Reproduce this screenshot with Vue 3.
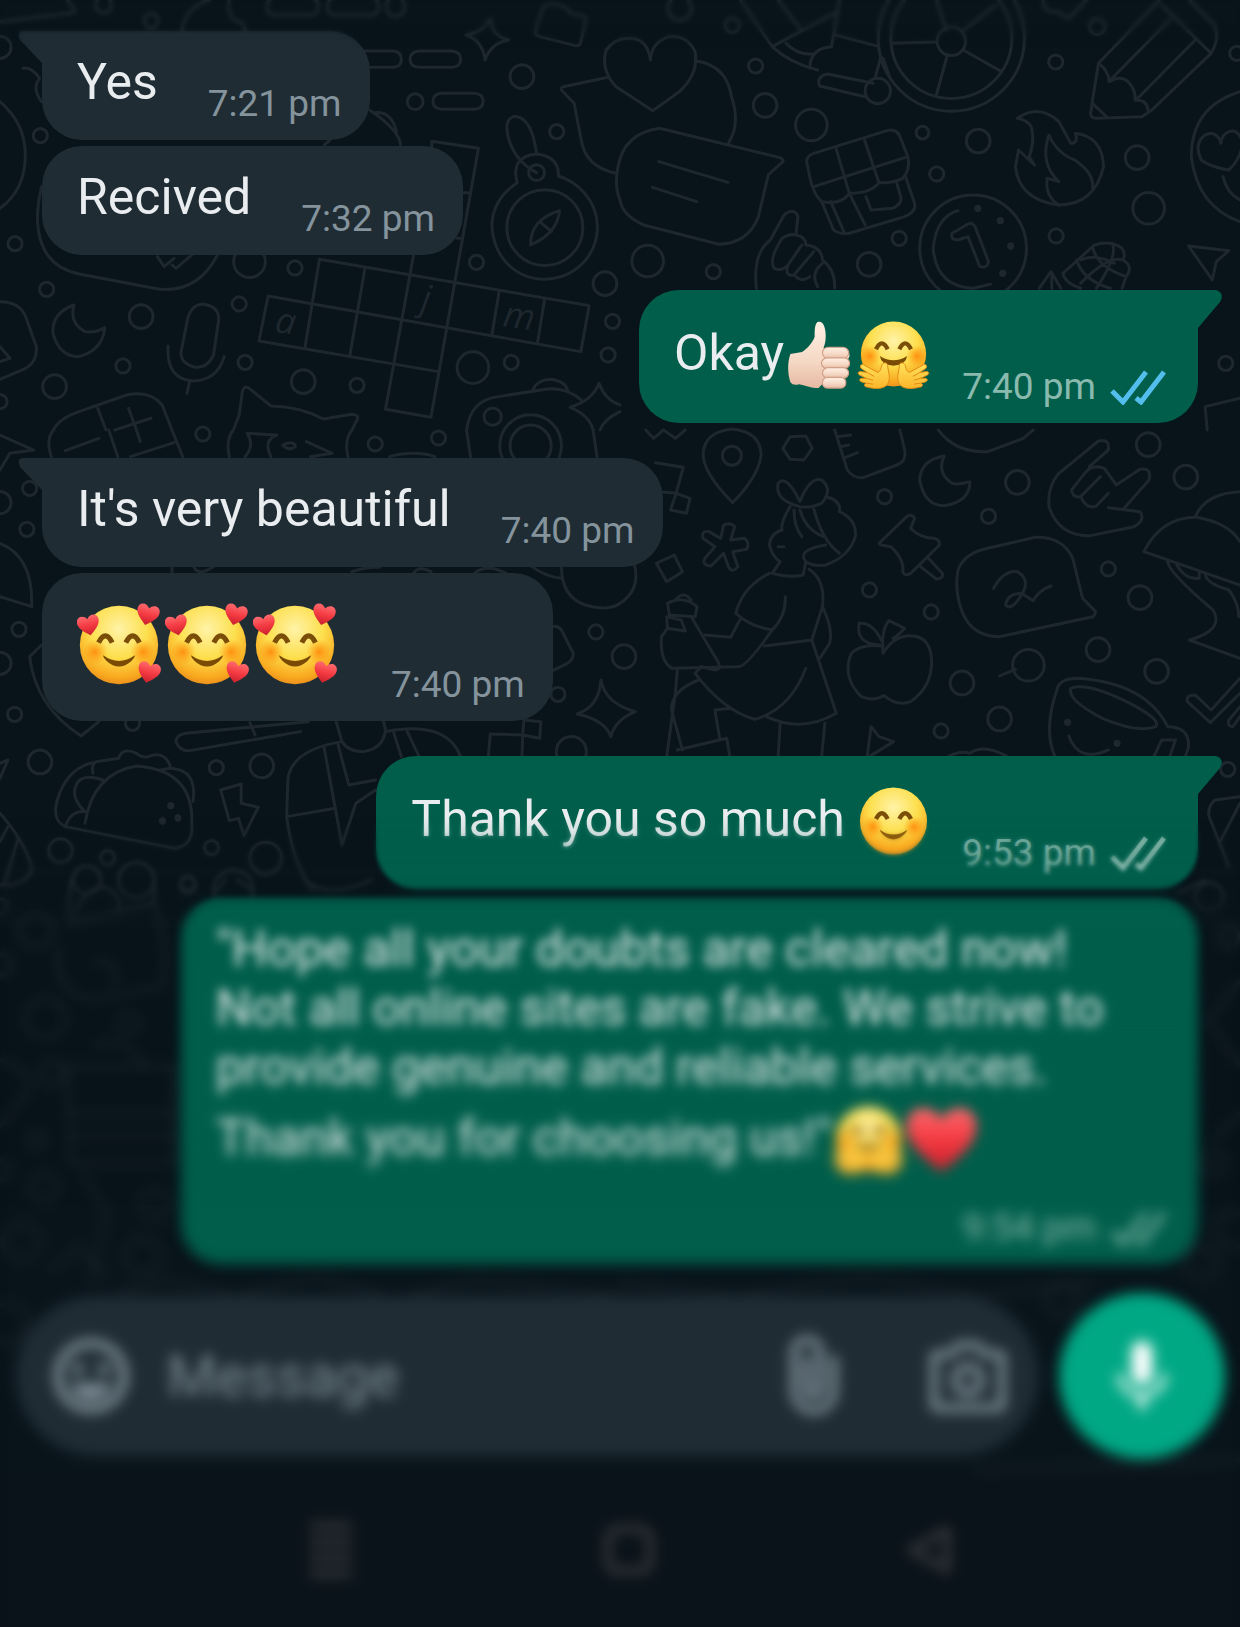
<template>
  <div class="chat">
    <!-- Shared emoji artwork -->
    <svg class="sprite" aria-hidden="true">
      <defs>
        <radialGradient id="skin" cx="0.5" cy="0.3" r="0.72">
          <stop offset="0" stop-color="#fff3a8" />
          <stop offset="0.5" stop-color="#fddf4e" />
          <stop offset="0.85" stop-color="#f9a91f" />
          <stop offset="1" stop-color="#e98c1b" />
        </radialGradient>
        <radialGradient id="blush">
          <stop offset="0" stop-color="#ff7a00" stop-opacity="0.75" />
          <stop offset="1" stop-color="#ff8a00" stop-opacity="0" />
        </radialGradient>
        <linearGradient id="palm" x1="0" y1="0" x2="0" y2="1">
          <stop offset="0" stop-color="#fff1e4" />
          <stop offset="0.6" stop-color="#f5d8c5" />
          <stop offset="1" stop-color="#e5b9a2" />
        </linearGradient>
        <linearGradient id="hand" x1="0" y1="0" x2="0" y2="1">
          <stop offset="0" stop-color="#ffe35c" />
          <stop offset="1" stop-color="#fbb52a" />
        </linearGradient>
        <linearGradient id="red" x1="0" y1="0" x2="0" y2="1">
          <stop offset="0" stop-color="#ff6b6e" />
          <stop offset="0.5" stop-color="#f43a42" />
          <stop offset="1" stop-color="#c9202c" />
        </linearGradient>
        <g id="heart">
          <path d="M12 22C6 17 1 13 1 7.500C1 1 9 0 12 5.500C15 0 23 1 23 7.500C23 13 18 17 12 22Z" fill="url(#red)" />
        </g>
        <g id="face">
          <circle cx="36" cy="36" r="34.500" fill="url(#skin)" />
          <circle cx="15" cy="42" r="11" fill="url(#blush)" />
          <circle cx="57" cy="42" r="11" fill="url(#blush)" />
          <g fill="none" stroke="#7a4d08" stroke-width="4.500">
            <path d="M18 34Q24 22 30 34" />
            <path d="M42 34Q48 22 54 34" />
          </g>
          <path d="M22 45Q36 55 50 45Q50 47 47 50Q36 60 25 50Q22 47 22 45Z" fill="#7a4b05" />
        </g>
        <symbol id="emoji-smile" viewBox="0 0 72 72">
          <use href="#face" />
        </symbol>
        <symbol id="emoji-hearts" viewBox="-1 -1 74 74">
          <use href="#face" />
          <use href="#heart" transform="translate(-1 8) rotate(-12 12 12) scale(0.88)" />
          <use href="#heart" transform="translate(50 -1) rotate(14 12 12) scale(0.9)" />
          <use href="#heart" transform="translate(51 50) rotate(14 12 12) scale(0.9)" />
        </symbol>
        <symbol id="emoji-hug" viewBox="0 0 72 72">
          <circle cx="36" cy="35" r="33.500" fill="url(#skin)" />
          <circle cx="12" cy="37" r="11" fill="url(#blush)" />
          <circle cx="60" cy="37" r="11" fill="url(#blush)" />
          <g fill="none" stroke="#7a4d08" stroke-width="4.500">
            <path d="M18 30Q24 18 30 30" />
            <path d="M42 30Q48 18 54 30" />
          </g>
          <path d="M22 37Q36 46 50 37Q49 46 36 47Q23 46 22 37Z" fill="#7a4b05" />
          <g id="open-hand" fill="url(#hand)" stroke="#e08a16" stroke-width="1">
            <path
              d="M27 44C22 45 25 51 20 54L5 46C2 45 1 48 3 50L9 54L2 53C-1 53 -1 56 2 57L8 60L3 60C0 61 1 63 4 64L8 65C5 66 6 69 9 69C16 71 28 72 31 64C33 57 30 52 30 46Q29 44 27 44Z"
            />
            <path d="M9 54L16 58M8 60L15 62M8 65L15 66" fill="none" />
          </g>
          <use href="#open-hand" transform="translate(72 0) scale(-1 1)" />
        </symbol>
        <symbol id="emoji-thumb" viewBox="0 0 72 72">
          <path
            d="M33 2C36 1 39 3 40 7C42 14 42 22 39 29L60 30C68 32 67 40 62 41L34 70C26 70 20 67 14 66Q8 68 5 64C2 54 2 44 5 35L17 33C22 30 29 22 30 17C30 11 30 4 33 2Z"
            fill="url(#palm)"
          />
          <g fill="url(#palm)" stroke="#d3a089" stroke-width="1.200">
            <rect x="38" y="28" width="27" height="12" rx="6" />
            <rect x="37" y="39" width="29" height="11" rx="6" />
            <rect x="38" y="49" width="27" height="11" rx="6" />
            <rect x="38" y="59" width="24" height="11" rx="5" />
          </g>
        </symbol>
        <symbol id="emoji-heart" viewBox="1 1 22 22">
          <use href="#heart" />
        </symbol>
      </defs>
    </svg>

    <!-- Doodle wallpaper -->
    <svg class="wallpaper" viewBox="0 0 1240 1627" preserveAspectRatio="xMinYMin slice" aria-hidden="true">
      <g v-for="tile in tiles" :key="tile.at" :transform="`translate(${tile.at}) scale(0.3954 0.3333)`">
        <path v-for="(d, i) in tile.lines" :key="i" :d="d" />
        <ellipse v-for="(c, i) in tile.rings" :key="`r${i}`" :cx="c[0]" :cy="c[1]" :rx="c[2]" :ry="c[2] * 1.186" />
        <ellipse v-for="(c, i) in tile.dots" :key="`d${i}`" class="dot" :cx="c[0]" :cy="c[1]" rx="9" ry="11" />
      </g>
      <text x="274" y="332" transform="rotate(8 274 332)">a</text>
      <text x="420" y="310" transform="rotate(8 420 310)">j</text>
      <text x="502" y="326" transform="rotate(8 502 326)">m</text>
    </svg>

    <main class="thread">
      <article
        v-for="message in messages"
        :key="message.id"
        class="bubble"
        :class="[message.from, { first: message.first, long: message.long }]"
      >
        <p class="body" :class="{ jumbo: message.jumbo }">
          <template v-for="(part, i) in message.parts" :key="i">
            <svg v-if="part.emoji" class="emoji" role="img" :aria-label="part.emoji">
              <use :href="`#emoji-${part.emoji}`" />
            </svg>
            <template v-else>{{ part.text }}</template>
          </template>
        </p>
        <div class="meta">
          <time>{{ message.time }}</time>
          <svg v-if="message.from === 'sent'" class="ticks" :class="{ read: message.read }" viewBox="0 0 56 35">
            <path d="M2 21L13 32L36 2M26 28L31 32L54 2" />
          </svg>
        </div>
      </article>
    </main>

    <form class="composer" @submit.prevent>
      <div class="field">
        <button type="button" class="tool" aria-label="Emoji">
          <svg width="80" height="80" viewBox="0 0 80 80">
            <circle cx="40" cy="40" r="33" fill="none" stroke="currentColor" stroke-width="9" />
            <circle cx="27" cy="33" r="6" fill="currentColor" />
            <circle cx="53" cy="33" r="6" fill="currentColor" />
            <path d="M20 47H60Q56 64 40 64Q24 64 20 47Z" fill="currentColor" />
          </svg>
        </button>
        <input v-model="draft" type="text" placeholder="Message" aria-label="Message" />
        <button type="button" class="tool" aria-label="Attach">
          <svg width="56" height="80" viewBox="0 0 56 80">
            <path
              d="M48 20V54A20 21 0 0 1 8 54V17A13 14 0 0 1 34 17V52A6 7 0 0 1 21 52V21"
              fill="none"
              stroke="currentColor"
              stroke-width="8"
            />
          </svg>
        </button>
        <button type="button" class="tool" aria-label="Camera">
          <svg width="80" height="80" viewBox="0 0 80 80">
            <path
              d="M10 18H23L31 9H49L57 18H70Q74 18 74 22V68Q74 72 70 72H10Q6 72 6 68V22Q6 18 10 18Z"
              fill="none"
              stroke="currentColor"
              stroke-width="8"
            />
            <circle cx="40" cy="44" r="13" fill="none" stroke="currentColor" stroke-width="8" />
          </svg>
        </button>
      </div>
      <button type="button" class="record" aria-label="Record voice message">
        <svg width="84" height="84" viewBox="0 0 24 24">
          <path
            fill="#fff"
            d="M12 14.500A3 3 0 0 0 15 11.500V5A3 3 0 0 0 9 5V11.500A3 3 0 0 0 12 14.500ZM17.500 11.500A5.500 5.500 0 0 1 6.500 11.500H4.800A7.300 7.300 0 0 0 11 18.300V21.500H13V18.300A7.300 7.300 0 0 0 19.200 11.500Z"
          />
        </svg>
      </button>
    </form>

    <nav class="system" aria-label="System navigation">
      <button type="button" aria-label="Recent apps">
        <svg viewBox="0 0 54 60"><path d="M6 6H48M6 22H48M6 38H48M6 54H48" /></svg>
      </button>
      <button type="button" aria-label="Home">
        <svg viewBox="0 0 54 60"><rect x="6" y="9" width="42" height="42" rx="10" /></svg>
      </button>
      <button type="button" aria-label="Back">
        <svg viewBox="0 0 54 60"><path d="M46 10V50L10 30Z" /></svg>
      </button>
    </nav>

    <!-- Soft focus towards the edges -->
    <div class="haze top"></div>
    <div class="haze light"></div>
    <div class="haze heavy"></div>
    <div class="haze bottom"></div>
  </div>
</template>

<script setup>
import { ref } from "vue";

const draft = ref("");

const messages = [
  { id: 1, from: "received", first: true, time: "7:21 pm", parts: [{ text: "Yes" }] },
  { id: 2, from: "received", time: "7:32 pm", parts: [{ text: "Recived" }] },
  {
    id: 3,
    from: "sent",
    first: true,
    read: true,
    time: "7:40 pm",
    parts: [{ text: "Okay" }, { emoji: "thumb" }, { emoji: "hug" }],
  },
  { id: 4, from: "received", first: true, time: "7:40 pm", parts: [{ text: "It's very beautiful" }] },
  {
    id: 5,
    from: "received",
    jumbo: true,
    time: "7:40 pm",
    parts: [{ emoji: "hearts" }, { emoji: "hearts" }, { emoji: "hearts" }],
  },
  {
    id: 6,
    from: "sent",
    first: true,
    time: "9:53 pm",
    parts: [{ text: "Thank you so much " }, { emoji: "smile" }],
  },
  {
    id: 7,
    from: "sent",
    long: true,
    time: "9:54 pm",
    parts: [
      {
        text: "\"Hope all your doubts are cleared now!\nNot all online sites are fake. We strive to\nprovide genuine and reliable services.\nThank you for choosing us!\"",
      },
      { emoji: "hug" },
      { emoji: "heart" },
    ],
  },
];

// Wallpaper artwork: line paths, rings [x, y, radius] and solid dots
const tiles = [
  {
    at: "0 0",
    lines: [
      "M0 65L185 38Q192 36 188 28L170 0",
      "M460 90Q470 20 530 0M580 0Q570 60 615 70L620 90",
      "M697 -5H783Q805 -5 805 20T783 45H697Q675 45 675 20T697 -5Z",
      "M850 -5H936Q958 -5 958 20T936 45H850Q828 45 828 20T850 -5Z",
      "M900 153H995Q1015 155 1015 178T995 202H900",
      "M1059 153H1143Q1165 155 1165 178T1143 202H1059Q1037 200 1037 178T1059 153Z",
      "M1117 280H1200Q1222 282 1222 304T1200 328H1117Q1095 326 1095 304T1117 280Z",
      "M1240 55Q1245 110 1287 120Q1240 130 1227 180Q1220 120 1178 105Q1225 95 1240 55Z",
      "M1362 60L1375 20Q1385 10 1400 12Q1430 15 1440 35Q1445 45 1470 45Q1485 50 1480 70L1468 130Q1465 138 1455 137L1365 110Q1352 105 1354 95Z",
      "M1538 232L1425 260Q1415 265 1422 273L1452 310L1470 420Q1480 500 1558 520",
      "M0 305Q64 370 64 465Q64 570 0 625",
      "M58 205Q80 200 100 235Q80 265 105 305",
      "M935 330Q1010 390 1013 435M950 338Q990 335 1003 395M835 420L820 435",
      "M1092 440V424L1210 445L1090 1252L975 1228L1046 765M1183 578H1172M1165 715H1155",
      "M808 778L1490 917L1469 1055L678 888L655 1023L1108 1115",
      "M808 778L771 1045M923 805L885 1065M1262 877L1244 1005M1377 900L1360 1025",
      "M1308 548Q1244 600 1244 680C1250 780 1310 838 1378 838C1460 835 1511 760 1511 680C1510 600 1460 545 1412 528Q1415 470 1357 462Q1290 470 1308 548",
      "M1415 632Q1410 700 1342 735Q1340 660 1415 632ZM1365 665L1395 695",
      "M1357 462Q1345 350 1300 349Q1270 360 1290 430Q1310 490 1357 518",
      "M105 560Q90 640 97 690Q110 800 200 822L400 867Q500 880 550 765M398 770L415 800L440 775M435 795L445 805L485 765",
      "M187 915Q130 940 134 1000Q150 1070 200 1070Q260 1050 265 983Q240 1000 215 995Q175 970 187 915Z",
      "M475 955Q485 912 515 913Q555 920 553 960L540 1065Q525 1105 493 1102Q455 1090 458 1055Z",
      "M425 1038Q420 1140 490 1143Q550 1140 567 1070M480 1143L473 1180",
      "M0 905Q50 905 65 950L92 1040Q95 1085 65 1105L0 1138M0 1040L25 1075L0 1085",
      "M135 1290Q150 1255 200 1235L320 1185Q380 1170 410 1215L435 1290M247 1225L268 1290M325 1225L345 1290M290 1290L382 1255",
      "M590 1290L605 1245L613 1175Q618 1155 630 1165L685 1218Q760 1220 818 1257L890 1243Q910 1245 903 1260L890 1290",
      "M1180 1290Q1190 1200 1260 1190L1380 1168Q1430 1160 1470 1200M1348 1168Q1360 1138 1395 1138Q1430 1145 1435 1170",
      "M1568 1215Q1530 1200 1515 1150Q1500 1200 1442 1222Q1490 1245 1500 1290M1568 1235Q1525 1260 1518 1290",
    ],
    rings: [
      [262, 15, 20], [382, 62, 18], [0, 142, 28], [1320, 230, 30], [1050, 305, 20], [1408, 395, 18],
      [102, 407, 18], [38, 731, 18], [118, 868, 18], [746, 804, 18], [1205, 787, 18], [605, 912, 18],
      [357, 950, 30], [311, 1098, 18], [620, 1087, 18], [138, 1160, 30], [767, 1145, 30], [903, 1156, 18],
      [1196, 1103, 40], [1293, 1087, 18], [1530, 851, 30], [1549, 964, 18], [1538, 1065, 18], [0, 1205, 18],
      [1000, 20, 24], [631, 785, 40], [1246, 1250, 22], [1378, 683, 96], [1357, 518, 20],
    ],
    dots: [],
  },
  {
    at: "620 0",
    lines: [
      "M77 180Q70 120 30 115Q-10 110 -35 150Q-50 210 -10 260L83 332L150 275Q200 220 190 155Q170 105 125 110Q80 125 77 180Z",
      "M190 182Q270 195 282 290Q305 370 275 428",
      "M-5 500Q10 400 100 385L395 470Q415 475 412 485L375 525L350 650Q325 730 250 733L60 675Q5 645 0 600Q-15 560 -5 500M98 485L273 547M82 562L194 605",
      "M305 0L385 140Q430 190 500 210M400 0L458 90M385 140L550 35M555 0L535 140Q480 145 480 205M420 130Q450 165 485 162M545 105L655 140",
      "M640 250L525 222Q495 230 505 258L625 292M660 170L645 235M665 175L685 240",
      "M800 0L825 90M950 15L865 95M690 130L802 126M868 150L965 215M828 165L800 285",
      "M1070 0Q1070 40 1105 35L1135 55L1180 0",
      "M1365 0L1210 190L1190 340Q1190 355 1205 355L1320 350L1345 330L1495 160Q1520 110 1500 70L1440 0M1370 15L1495 160M1390 60L1240 240M1455 120L1305 300",
      "M1210 190Q1235 210 1237 245Q1265 225 1285 245Q1305 270 1303 300Q1335 300 1335 330M1195 310L1230 350",
      "M1568 275Q1445 320 1445 470Q1460 620 1568 665M1520 430Q1510 390 1480 405Q1450 430 1470 480Q1490 500 1540 510Q1568 480 1575 430Q1565 385 1540 395Q1520 405 1520 430M1525 530Q1535 580 1568 600",
      "M475 500Q465 470 490 460L675 392Q700 385 708 410L728 470Q735 510 715 535Q690 550 655 548Q635 580 580 580Q560 615 510 605Q485 580 475 500Z",
      "M490 560L728 470M545 440L580 580M617 415L655 548M510 605L540 690Q555 705 580 700L720 650Q750 635 745 610L722 530M533 605L568 700M580 580L620 675M622 590L635 630L690 625Q715 610 710 590L700 550",
      "M1005 355Q1060 310 1110 365L1140 430Q1160 430 1152 400Q1220 410 1223 500Q1200 615 1110 615Q1010 600 1000 500L1008 450L1048 495L1035 470Q1050 420 1040 380Q1030 360 1005 355Z",
      "M1110 615Q1075 590 1080 535L1110 545Q1060 490 1085 405Q1105 460 1150 480Q1200 520 1195 565",
      "M840 700L880 672Q890 665 898 680L932 785Q930 805 910 800L880 710L855 720Q835 720 840 700Z",
      "M345 865Q335 760 380 720L415 645Q440 620 450 650L445 705Q430 700 410 715Q375 780 390 805Q410 815 425 795L460 735M445 705Q470 710 470 735Q510 740 512 780Q545 810 543 865M425 795Q415 830 440 825L490 755M440 825Q460 850 480 830M500 860Q480 820 512 790",
      "M1060 865L1090 815L1115 865M1092 830V865",
      "M1120 820L1200 735Q1240 720 1270 745Q1280 765 1272 780Q1300 800 1280 830L1270 865M1120 820Q1125 850 1165 865M1155 780Q1170 840 1240 865M1195 740Q1205 800 1280 830M1272 780Q1235 765 1165 850M1245 730Q1260 765 1205 865M1165 780Q1200 760 1250 790",
      "M1438 738L1540 752L1508 785L1498 840Z",
      "M1568 1195L1480 1220L1485 1290M855 632Q800 650 792 745Q800 860 893 865L937 853",
    ],
    rings: [
      [151, 25, 30], [284, 76, 18], [343, 198, 18], [367, 316, 30], [484, 375, 40], [765, 398, 16],
      [906, 423, 30], [801, 522, 18], [706, 715, 18], [630, 793, 30], [70, 783, 40], [236, 815, 18],
      [1207, 80, 20], [1102, 186, 18], [1308, 473, 30], [1337, 625, 40], [1103, 708, 18], [1532, 1090, 18],
      [1560, 160, 18], [838, 114, 185], [838, 114, 153], [838, 124, 36], [652, 273, 32], [893, 745, 135],
    ],
    dots: [[905, 625], [962, 662], [988, 738], [968, 820]],
  },
  {
    at: "0 430",
    lines: [
      "M0 15L85 60L25 70L0 120",
      "M130 80Q115 30 135 0M165 62L250 25M275 0L298 80M330 80L440 38M435 0L462 80M345 0L355 35",
      "M580 80Q570 30 590 0M620 80Q645 45 625 10L700 15Q665 30 685 80M715 45Q745 30 747 50Q730 65 715 45M775 35L840 70L785 80",
      "M880 80Q870 30 890 0M1180 0L1190 80M1500 0L1510 80M985 80Q1050 60 1100 80",
      "M0 340Q85 380 80 530L0 500M105 645L75 680Q90 830 205 918L250 875",
      "M435 410V430M490 410Q500 440 540 410M890 425Q930 410 960 412M1045 430Q1060 405 1090 425M1200 430Q1230 400 1280 430M1345 410Q1380 440 1420 445",
      "M1395 590Q1410 585 1420 600L1450 670Q1450 690 1435 700L1392 725",
      "M1420 410Q1420 500 1480 525Q1540 545 1568 520Q1620 480 1605 405",
      "M1520 750Q1530 820 1607 845Q1555 870 1545 920Q1530 870 1460 852Q1515 830 1520 750Z",
      "M780 875L470 910Q445 915 445 935Q455 965 480 962L760 905M632 878L645 915",
      "M850 875L865 935Q880 965 920 965Q970 955 975 900L970 875M865 935Q735 960 728 1050L725 1160Q740 1300 790 1380M725 1160L848 1135",
      "M820 955L865 1245L900 1120L950 1080M855 945L882 1065L950 1050M975 905Q1130 870 1165 980M995 905L1015 980M1030 905L1060 980",
      "M1325 870L1368 875L1365 925L1322 915ZM1318 915L1240 912L1235 980M1322 920L1320 980",
      "M165 1190Q130 1170 145 1110Q170 1010 245 995Q270 990 300 985Q310 950 345 970Q360 985 375 980Q420 960 432 1015Q500 1020 488 1115",
      "M165 1190L440 1255Q490 1250 485 1180Q490 1020 345 1008Q235 1030 215 1180M165 1190Q180 1140 215 1145Q175 1100 195 1060Q210 1030 260 1050M235 1030Q230 1000 245 995M405 1020L432 1015",
      "M558 1080L610 1062L610 1120L653 1132L617 1217L603 1165L580 1172Z",
      "M0 1150Q60 1230 80 1310Q80 1350 30 1365H0M0 1235L20 1190M10 1365L45 1230M0 1000L20 990L0 1045",
    ],
    rings: [
      [513, 12, 18], [949, 42, 18], [1109, 24, 18], [75, 175, 18], [0, 218, 28], [68, 298, 18],
      [48, 598, 18], [0, 700, 28], [37, 853, 18], [335, 880, 18], [101, 996, 30], [547, 1013, 18],
      [662, 1008, 30], [153, 1262, 30], [272, 1283, 18], [535, 1253, 18], [672, 1284, 40], [1507, 606, 18],
      [1411, 793, 18], [1445, 965, 38], [1342, 47, 52], [1342, 47, 78], [220, 1350, 35], [345, 1350, 45],
      [475, 1360, 18], [590, 1380, 50],
    ],
    dots: [[432, 1127], [450, 1164], [411, 1173]],
  },
  {
    at: "620 430",
    lines: [
      "M285 218Q210 130 210 70Q215 5 283 -3Q355 5 357 75Q350 140 285 218Z",
      "M412 55L430 20L470 18L486 55L465 90L430 88Z",
      "M255 325L262 285Q280 275 290 290L280 330L315 325Q330 340 320 358L285 365L298 410Q285 430 275 412L262 370L230 408Q205 405 215 385L240 350L210 325Q205 300 225 305Z",
      "M90 98L160 112L142 190L100 185M142 190L177 205L168 250L128 240ZM92 400L137 375L158 425L118 455Z",
      "M543 0L575 120Q590 145 615 143L700 105Q725 95 720 60L708 0M550 20L583 15M558 50L578 45M565 85L600 68M65 0L85 25L110 0L140 25L165 0",
      "M805 0Q850 70 930 65L1020 25L1045 0",
      "M820 78Q760 90 758 150Q770 228 820 227Q885 215 885 155Q860 165 840 160Q800 130 820 78Z",
      "M1187 110L1235 60Q1240 25 1210 33L1110 130Q1080 170 1085 230Q1110 320 1190 317L1300 290Q1330 270 1315 245L1235 233M1275 235L1338 150Q1345 110 1315 118L1255 165L1225 115Q1195 100 1175 130L1142 180Q1145 205 1165 200L1215 140M1165 200Q1180 240 1205 228L1235 190",
      "M1325 365Q1370 260 1460 262Q1540 280 1568 335M1325 365L1568 465M1455 260Q1480 190 1568 185M1385 395Q1390 430 1500 540Q1530 600 1440 630L1568 685M1408 405Q1430 450 1465 445V425M1480 430Q1480 460 1540 480Q1565 520 1565 560",
      "M1568 745L1495 840L1455 795Q1430 795 1435 815L1493 878L1568 790M1568 830L1540 870Q1535 890 1550 890L1568 860",
      "M855 420Q870 370 930 355L1050 322Q1120 320 1145 385L1170 505L1203 545Q1200 562 1190 562L960 620Q890 620 865 545Q845 480 855 420Z",
      "M945 475Q970 420 1005 425Q1040 450 1015 495Q990 545 975 525Q980 490 1015 490L1045 512Q1060 480 1090 468",
      "M655 340L725 260Q740 250 745 265L735 295Q760 325 795 325Q810 330 808 345L735 430Q720 440 715 425Q720 390 685 350L660 345ZM760 410L800 447Q820 445 815 430L780 385",
      "M665 648Q610 640 585 670Q560 740 610 800Q640 815 668 797Q700 830 735 815Q790 770 788 690Q785 615 730 617Q690 620 665 670Q660 600 680 572L720 595Q700 620 690 625M665 640Q640 575 605 580Q595 640 655 645",
      "M960 738L1000 718",
      "M1100 980Q1070 900 1105 780Q1110 745 1160 745Q1330 760 1385 890Q1440 890 1438 950L1430 980M1350 980L1370 930L1405 930L1390 980M1140 775Q1180 755 1290 820Q1370 870 1355 890Q1310 910 1220 865Q1130 810 1140 775ZM1135 918Q1160 1000 1235 960",
      "M625 980L635 890L655 920L692 935L630 980M830 980Q860 960 885 970Q920 940 980 980",
      "M455 230Q390 210 400 160Q420 130 455 215Q480 140 510 150Q540 180 510 220Q480 235 455 230M520 200Q560 210 555 245Q600 270 595 320Q580 380 520 405Q490 410 470 395Q445 360 520 345M490 235Q510 330 555 370",
      "M430 230Q405 280 410 300Q380 310 378 345Q385 380 405 395L385 430Q430 445 463 435L470 395M440 240Q440 290 460 320M455 240Q470 300 515 320M400 350H415",
      "M378 430Q310 470 293 550Q330 590 385 600Q420 560 418 500M478 418Q520 450 512 530L485 630L365 648M303 570L280 622L215 615M385 600Q320 710 300 710L130 715Q100 690 105 620L120 595M512 530Q540 600 530 640L505 685",
      "M120 520Q160 495 195 530L190 560L125 555ZM140 510Q160 480 180 510M180 560L250 700Q255 720 240 720L205 710M120 595L118 560L155 570L165 603Z",
      "M205 710L190 730Q260 840 340 868Q430 840 470 715M485 630L547 850Q460 910 370 860M200 750Q130 780 130 840L158 960M145 720L140 790L118 980M280 835L240 840L252 925M145 960L270 925L277 975M405 880L400 980M518 880L510 980",
      "M1568 1100L1505 1110Q1485 1130 1490 1160L1540 1310M1568 1120L1520 1230",
    ],
    rings: [
      [283, 77, 24], [1336, 44, 30], [1431, 141, 30], [1005, 157, 30], [669, 200, 18], [932, 259, 18],
      [1235, 417, 18], [1315, 503, 30], [631, 480, 18], [787, 546, 18], [1209, 659, 30], [1033, 706, 40],
      [1357, 724, 30], [865, 759, 30], [960, 867, 30], [812, 903, 18], [10, 680, 30], [1537, 1018, 18],
    ],
    dots: [[1132, 877], [1257, 940]],
  },
  {
    at: "0 880",
    lines: [
      "M180 0Q170 80 180 130L390 70Q430 200 410 320L230 360Q130 330 150 200M190 100Q220 20 260 20Q310 40 300 100M390 0V70M240 250Q300 230 290 320",
      "M170 560H440V850H180ZM240 500Q300 450 370 560M180 700H440M180 770H440",
      "M0 540Q80 560 70 640L0 740M210 880L270 1000L230 1200M130 1170L200 1100L270 1190",
      "M540 40L570 0M640 30L600 0M770 0Q830 60 940 0",
      "M300 1240L420 1200L600 1250L800 1190L1000 1260L1200 1200L1568 1250",
    ],
    rings: [
      [0, 80, 20], [90, 150, 42], [475, 15, 20], [0, 255, 28], [115, 415, 50], [325, 430, 25], [130, 580, 30],
      [95, 780, 20], [110, 920, 35], [390, 970, 35], [55, 1085, 45], [360, 1130, 45], [20, 1330, 50], [0, 870, 25],
    ],
    dots: [],
  },
  {
    at: "620 880",
    lines: ["M1410 40L1480 0M1568 300L1490 420L1568 560M1568 700L1500 780M0 1210L300 1250L620 1190L900 1250L1200 1210", "M900 1770L1568 1740"],
    rings: [[1490, 50, 35], [1540, 170, 25], [1500, 850, 30], [1550, 1050, 45], [1470, 1150, 40], [1120, 1260, 40]],
    dots: [],
  },
];
</script>

<style>
body {
  margin: 0;
  background: #0b131a;
}
</style>

<style scoped>
.chat {
  position: relative;
  display: flex;
  flex-direction: column;
  min-height: 100vh;
  overflow: hidden;
  background: #08131a;
  color: #e9edef;
  font-family: Roboto, "Liberation Sans", sans-serif;
}

.sprite {
  position: absolute;
  width: 0;
  height: 0;
}

.wallpaper {
  position: absolute;
  inset: 0;
  width: 100%;
  height: 100%;
  fill: none;
  stroke: #1e272e;
  stroke-width: 3;
  stroke-linecap: round;
  stroke-linejoin: round;
}

.wallpaper path,
.wallpaper ellipse {
  vector-effect: non-scaling-stroke;
}

.wallpaper .dot,
.wallpaper text {
  fill: #1e272e;
  stroke: none;
}

.wallpaper text {
  font: italic 36px "Open Sans", sans-serif;
}

.thread {
  position: relative;
  display: flex;
  flex-direction: column;
  gap: 6px;
  padding: 31px 42px 27px;
}

.bubble {
  position: relative;
  display: flex;
  align-items: flex-end;
  gap: 50px;
  box-sizing: border-box;
  max-width: 88%;
  padding: 22px 28px 14px 35px;
  border-radius: 40px;
}

.received {
  align-self: flex-start;
  background: #1f2c34;
}

.sent {
  align-self: flex-end;
  gap: 32px;
  padding-right: 32px;
  background: #005e4b;
}

.first:not(:first-child) {
  margin-top: 29px;
}

.received.first {
  border-top-left-radius: 0;
}

.sent.first {
  border-top-right-radius: 0;
}

.first::before {
  content: "";
  position: absolute;
  top: 0;
  width: 24px;
  height: 38px;
  background: inherit;
}

.received.first::before {
  right: 100%;
  clip-path: path("M6 0H24V32L2 9Q-2 0 6 0Z");
}

.sent.first::before {
  left: 100%;
  clip-path: path("M0 0H18Q27 3 22 12L0 38Z");
}

.long {
  flex-direction: column;
  gap: 12px;
  width: 88%;
  margin-top: 3px;
}

.long .body {
  align-self: flex-start;
}

.body {
  margin: 0 0 14px;
  font-size: 50px;
  line-height: 59px;
  white-space: pre-line;
}

.emoji {
  width: 73px;
  height: 70px;
  margin: 8px 0 5px;
  vertical-align: -25px;
}

.jumbo {
  display: flex;
}

.jumbo .emoji {
  width: 84px;
  height: 84px;
  margin: 8px 4px 6px 0;
}

.meta {
  display: flex;
  align-items: center;
  gap: 14px;
  color: #84939c;
  font-size: 37px;
  line-height: 44px;
  white-space: nowrap;
}

.sent .meta {
  color: #8abaae;
}

.ticks {
  width: 56px;
  height: 35px;
  fill: none;
  stroke: currentColor;
  stroke-width: 5;
}

.ticks.read {
  stroke: #53bdeb;
}

.composer {
  position: relative;
  display: flex;
  align-items: center;
  gap: 20px;
  margin-top: auto;
  padding: 0 15px 13px 16px;
}

.field {
  display: flex;
  flex: 1;
  align-items: center;
  min-width: 0;
  height: 160px;
  box-sizing: border-box;
  padding: 0 31px 0 35px;
  border-radius: 80px;
  background: #1f2c34;
}

.field input {
  flex: 1;
  min-width: 0;
  margin-left: 36px;
  padding: 0;
  border: 0;
  outline: 0;
  background: none;
  color: #e9edef;
  font: 57px Roboto, "Liberation Sans", sans-serif;
}

.field input::placeholder {
  color: #7d8b94;
  opacity: 1;
}

button {
  padding: 0;
  border: 0;
  background: none;
  cursor: pointer;
}

.tool {
  color: #7d8b94;
}

.tool + .tool {
  margin-left: 86px;
}

.tool svg,
.record svg,
.system svg {
  display: block;
}

.record {
  display: grid;
  place-items: center;
  width: 166px;
  height: 166px;
  border-radius: 50%;
  background: #00a884;
}

.system {
  position: relative;
  display: flex;
  align-items: center;
  justify-content: space-between;
  height: 155px;
  padding: 0 23% 0 24.5%;
  background: #0b131a;
}

.system svg {
  width: 54px;
  height: 60px;
  fill: none;
  stroke: #34383d;
  stroke-width: 7;
  stroke-linejoin: round;
}

.haze {
  position: absolute;
  right: 0;
  left: 0;
  pointer-events: none;
}

.haze.top {
  top: 0;
  height: 48px;
  backdrop-filter: blur(2px);
  mask-image: linear-gradient(#000 50%, transparent);
}

.haze.light {
  bottom: 0;
  height: 810px;
  backdrop-filter: blur(2px);
  mask-image: linear-gradient(transparent, #000 50px);
}

.haze.heavy {
  bottom: 0;
  height: 750px;
  backdrop-filter: blur(5px);
  mask-image: linear-gradient(transparent, #000 40px);
}

.haze.bottom {
  bottom: 0;
  height: 700px;
  backdrop-filter: blur(4px);
  mask-image: linear-gradient(transparent, #000 280px);
}
</style>
